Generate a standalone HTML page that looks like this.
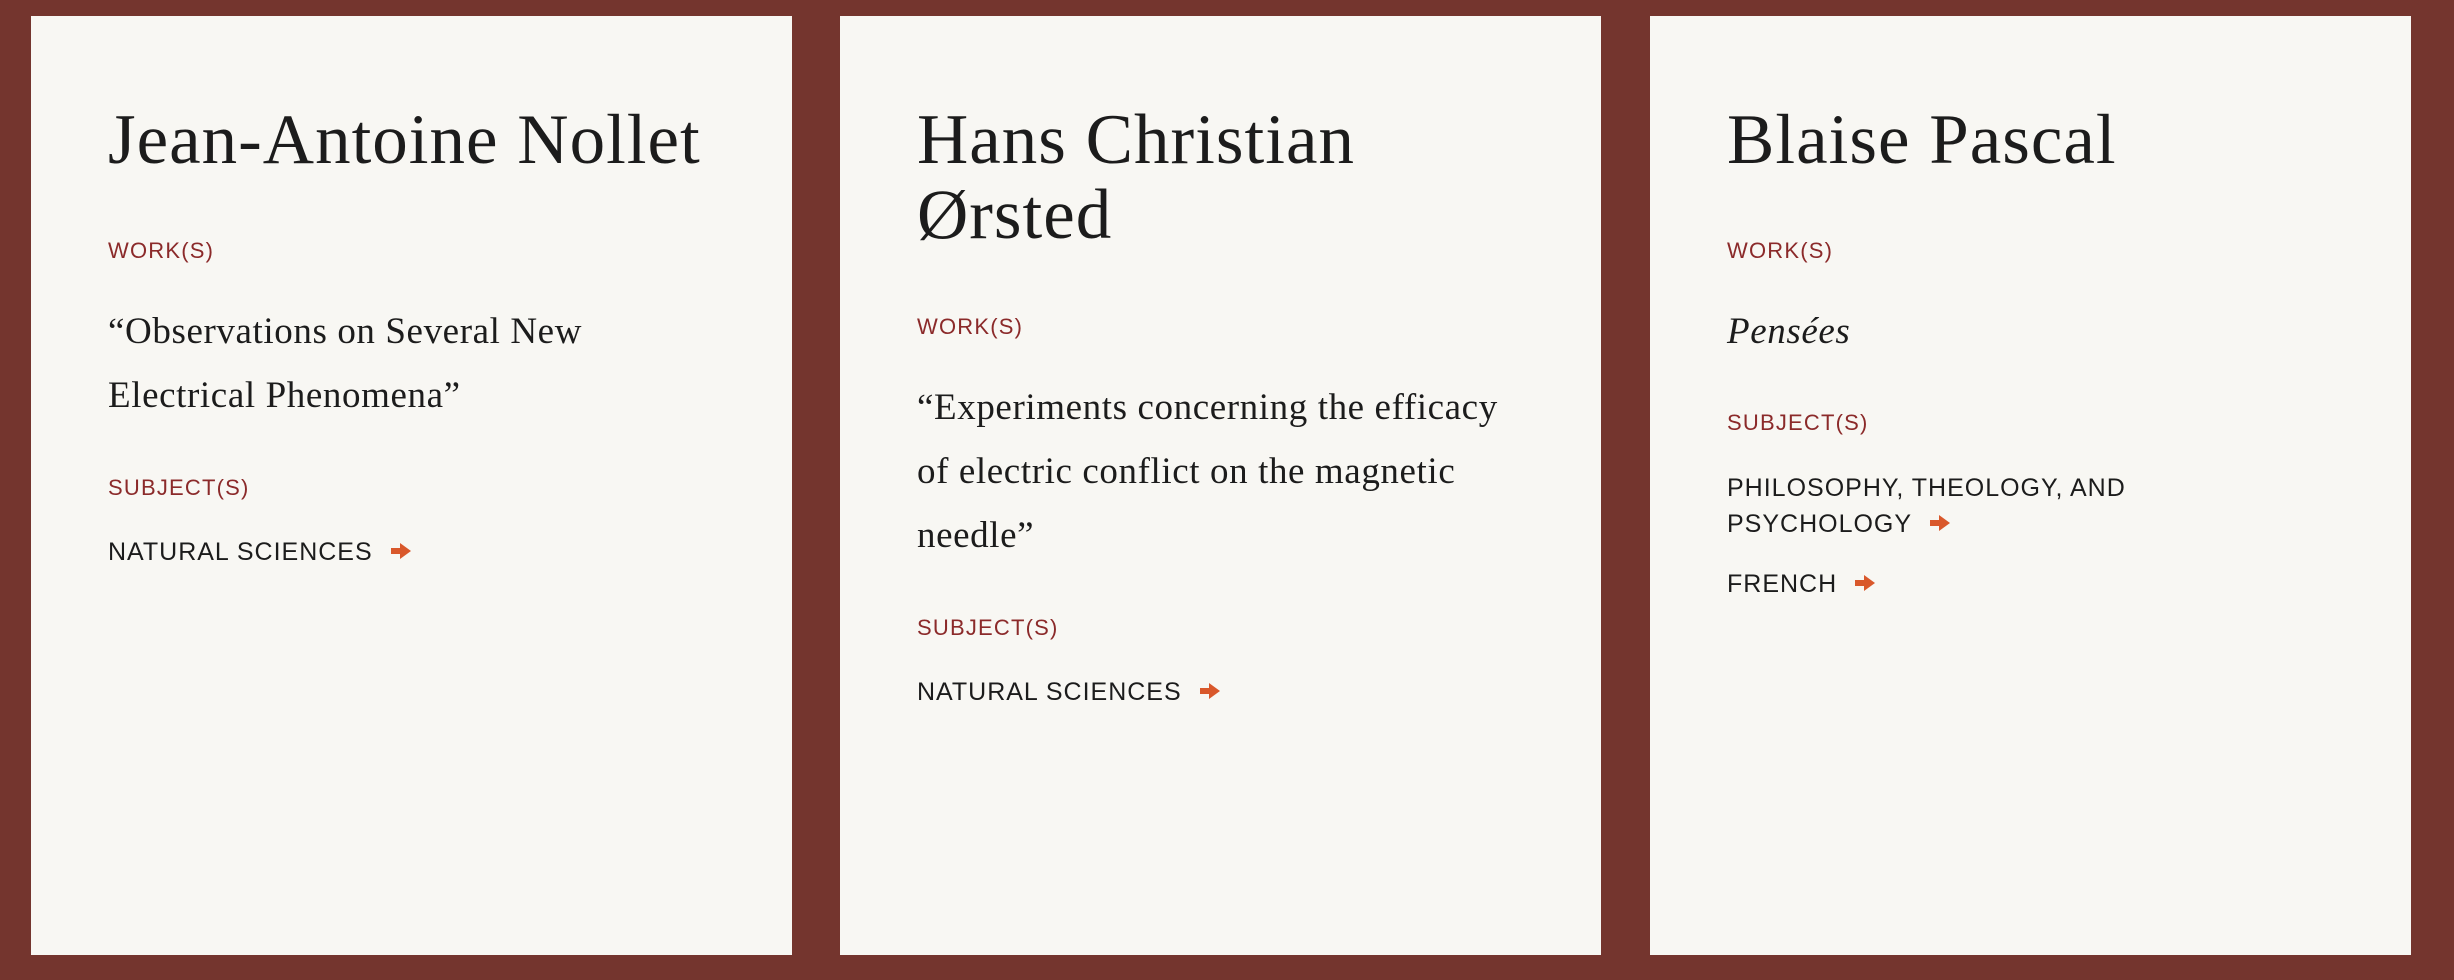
<!DOCTYPE html>
<html><head><meta charset="utf-8"><style>
html,body{margin:0;padding:0}
body{width:2454px;height:980px;background:#74352e;position:relative;overflow:hidden}
.card{position:absolute;top:16px;width:761px;height:939px;background:#f8f7f3}
.t{position:absolute;left:77px;white-space:nowrap;height:60px;line-height:60px;margin-top:-30px}
.h{font-family:"Liberation Serif",serif;font-size:71px;letter-spacing:1px;color:#1c1c1c}
.lab{font-family:"Liberation Sans",sans-serif;font-size:22px;letter-spacing:1.2px;color:#8b2a2a}
.w{font-family:"Liberation Serif",serif;font-size:37px;letter-spacing:0.6px;color:#1c1c1c}
.s{font-family:"Liberation Sans",sans-serif;font-size:25px;letter-spacing:1px;color:#1c1c1c}
.arr{display:inline-block;vertical-align:middle;margin-left:18px;margin-top:-4px}
</style></head><body>
<svg width="0" height="0" style="position:absolute"><defs><symbol id="a" viewBox="0 0 20 16"><path d="M0 5h9V0l11 8-11 8v-5H0z" fill="#d9582b"/></symbol></defs></svg>

<div class="card" style="left:31px">
<div class="t h" style="top:124px">Jean-Antoine Nollet</div>
<div class="t lab" style="top:235px">WORK(S)</div>
<div class="t w" style="top:316px">“Observations on Several New</div>
<div class="t w" style="top:380px">Electrical Phenomena”</div>
<div class="t lab" style="top:472px">SUBJECT(S)</div>
<div class="t s" style="top:536px">NATURAL SCIENCES<svg class="arr" width="20" height="16"><use href="#a"/></svg></div>
</div>

<div class="card" style="left:840px">
<div class="t h" style="top:124px">Hans Christian</div>
<div class="t h" style="top:199px">Ørsted</div>
<div class="t lab" style="top:311px">WORK(S)</div>
<div class="t w" style="top:392px">“Experiments concerning the efficacy</div>
<div class="t w" style="top:456px">of electric conflict on the magnetic</div>
<div class="t w" style="top:520px">needle”</div>
<div class="t lab" style="top:612px">SUBJECT(S)</div>
<div class="t s" style="top:676px">NATURAL SCIENCES<svg class="arr" width="20" height="16"><use href="#a"/></svg></div>
</div>

<div class="card" style="left:1650px">
<div class="t h" style="top:124px">Blaise Pascal</div>
<div class="t lab" style="top:235px">WORK(S)</div>
<div class="t w" style="top:316px;font-style:italic">Pensées</div>
<div class="t lab" style="top:407px">SUBJECT(S)</div>
<div class="t s" style="top:472px">PHILOSOPHY, THEOLOGY, AND</div>
<div class="t s" style="top:508px">PSYCHOLOGY<svg class="arr" width="20" height="16"><use href="#a"/></svg></div>
<div class="t s" style="top:568px">FRENCH<svg class="arr" width="20" height="16"><use href="#a"/></svg></div>
</div>
</body></html>
